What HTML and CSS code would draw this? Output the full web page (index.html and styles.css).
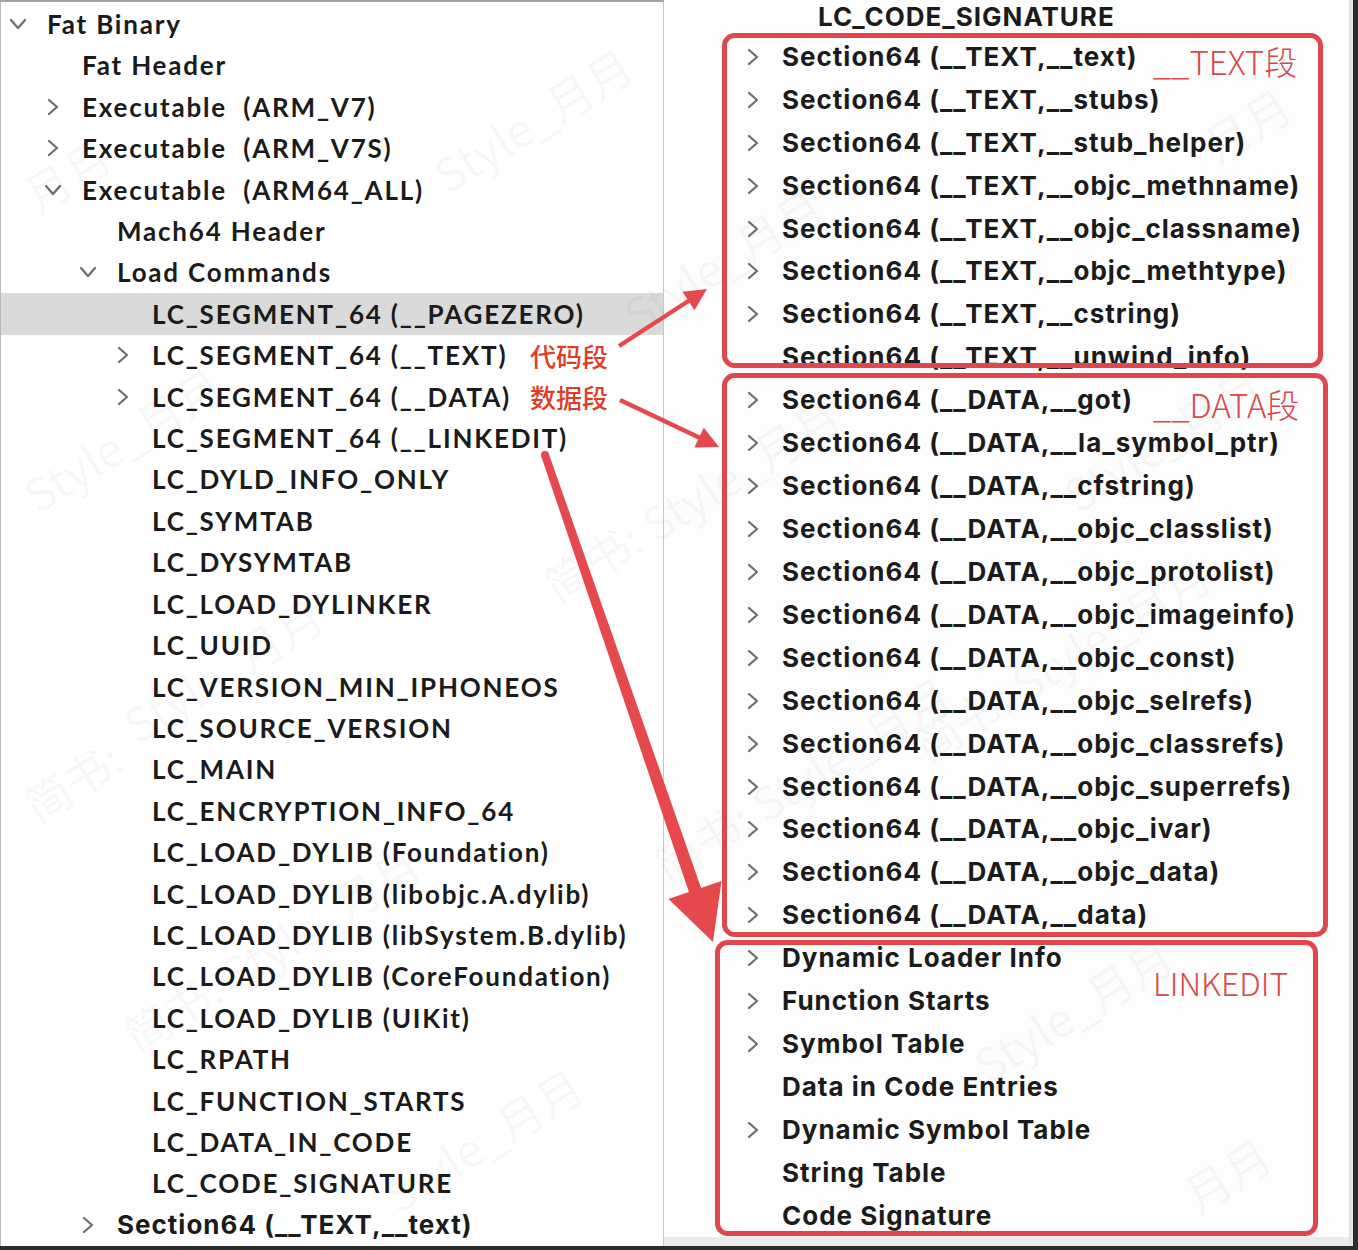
FILE: index.html
```html
<!DOCTYPE html>
<html lang="zh">
<head>
<meta charset="utf-8">
<title>MachOView</title>
<link rel="stylesheet" href="styles.css">
</head>
<body>
<div class="window">
  <div class="pane left">
    <div class="row lv0"><span class="chev"><svg class="down" viewBox="0 0 18 12"><path d="M2 2 L9 10 L16 2"/></svg></span>Fat Binary</div>
    <div class="row lv1"><span class="chev"></span>Fat Header</div>
    <div class="row lv1"><span class="chev"><svg class="rt" viewBox="0 0 12 18"><path d="M2 2 L10 9 L2 16"/></svg></span>Executable&nbsp; (ARM_V7)</div>
    <div class="row lv1"><span class="chev"><svg class="rt" viewBox="0 0 12 18"><path d="M2 2 L10 9 L2 16"/></svg></span>Executable&nbsp; (ARM_V7S)</div>
    <div class="row lv1"><span class="chev"><svg class="down" viewBox="0 0 18 12"><path d="M2 2 L9 10 L16 2"/></svg></span>Executable&nbsp; (ARM64_ALL)</div>
    <div class="row lv2"><span class="chev"></span>Mach64 Header</div>
    <div class="row lv2"><span class="chev"><svg class="down" viewBox="0 0 18 12"><path d="M2 2 L9 10 L16 2"/></svg></span>Load Commands</div>
    <div class="row lv3 selected"><span class="chev"></span>LC_SEGMENT_64 (__PAGEZERO)</div>
    <div class="row lv3"><span class="chev"><svg class="rt" viewBox="0 0 12 18"><path d="M2 2 L10 9 L2 16"/></svg></span>LC_SEGMENT_64 (__TEXT)</div>
    <div class="row lv3"><span class="chev"><svg class="rt" viewBox="0 0 12 18"><path d="M2 2 L10 9 L2 16"/></svg></span>LC_SEGMENT_64 (__DATA)</div>
    <div class="row lv3"><span class="chev"></span>LC_SEGMENT_64 (__LINKEDIT)</div>
    <div class="row lv3"><span class="chev"></span>LC_DYLD_INFO_ONLY</div>
    <div class="row lv3"><span class="chev"></span>LC_SYMTAB</div>
    <div class="row lv3"><span class="chev"></span>LC_DYSYMTAB</div>
    <div class="row lv3"><span class="chev"></span>LC_LOAD_DYLINKER</div>
    <div class="row lv3"><span class="chev"></span>LC_UUID</div>
    <div class="row lv3"><span class="chev"></span>LC_VERSION_MIN_IPHONEOS</div>
    <div class="row lv3"><span class="chev"></span>LC_SOURCE_VERSION</div>
    <div class="row lv3"><span class="chev"></span>LC_MAIN</div>
    <div class="row lv3"><span class="chev"></span>LC_ENCRYPTION_INFO_64</div>
    <div class="row lv3"><span class="chev"></span>LC_LOAD_DYLIB (Foundation)</div>
    <div class="row lv3"><span class="chev"></span>LC_LOAD_DYLIB (libobjc.A.dylib)</div>
    <div class="row lv3"><span class="chev"></span>LC_LOAD_DYLIB (libSystem.B.dylib)</div>
    <div class="row lv3"><span class="chev"></span>LC_LOAD_DYLIB (CoreFoundation)</div>
    <div class="row lv3"><span class="chev"></span>LC_LOAD_DYLIB (UIKit)</div>
    <div class="row lv3"><span class="chev"></span>LC_RPATH</div>
    <div class="row lv3"><span class="chev"></span>LC_FUNCTION_STARTS</div>
    <div class="row lv3"><span class="chev"></span>LC_DATA_IN_CODE</div>
    <div class="row lv3"><span class="chev"></span>LC_CODE_SIGNATURE</div>
    <div class="row lv2 sf"><span class="chev"><svg class="rt" viewBox="0 0 12 18"><path d="M2 2 L10 9 L2 16"/></svg></span>Section64 (__TEXT,__text)</div>
  </div>

  <div class="pane right">
    <div class="tree">
      <div class="row deep first"><span class="chev"></span>LC_CODE_SIGNATURE</div>
      <div class="row"><span class="chev"><svg class="rt" viewBox="0 0 12 18"><path d="M2 2 L10 9 L2 16"/></svg></span>Section64 (__TEXT,__text)</div>
      <div class="row"><span class="chev"><svg class="rt" viewBox="0 0 12 18"><path d="M2 2 L10 9 L2 16"/></svg></span>Section64 (__TEXT,__stubs)</div>
      <div class="row"><span class="chev"><svg class="rt" viewBox="0 0 12 18"><path d="M2 2 L10 9 L2 16"/></svg></span>Section64 (__TEXT,__stub_helper)</div>
      <div class="row"><span class="chev"><svg class="rt" viewBox="0 0 12 18"><path d="M2 2 L10 9 L2 16"/></svg></span>Section64 (__TEXT,__objc_methname)</div>
      <div class="row"><span class="chev"><svg class="rt" viewBox="0 0 12 18"><path d="M2 2 L10 9 L2 16"/></svg></span>Section64 (__TEXT,__objc_classname)</div>
      <div class="row"><span class="chev"><svg class="rt" viewBox="0 0 12 18"><path d="M2 2 L10 9 L2 16"/></svg></span>Section64 (__TEXT,__objc_methtype)</div>
      <div class="row"><span class="chev"><svg class="rt" viewBox="0 0 12 18"><path d="M2 2 L10 9 L2 16"/></svg></span>Section64 (__TEXT,__cstring)</div>
      <div class="row"><span class="chev"></span>Section64 (__TEXT,__unwind_info)</div>
      <div class="row"><span class="chev"><svg class="rt" viewBox="0 0 12 18"><path d="M2 2 L10 9 L2 16"/></svg></span>Section64 (__DATA,__got)</div>
      <div class="row"><span class="chev"><svg class="rt" viewBox="0 0 12 18"><path d="M2 2 L10 9 L2 16"/></svg></span>Section64 (__DATA,__la_symbol_ptr)</div>
      <div class="row"><span class="chev"><svg class="rt" viewBox="0 0 12 18"><path d="M2 2 L10 9 L2 16"/></svg></span>Section64 (__DATA,__cfstring)</div>
      <div class="row"><span class="chev"><svg class="rt" viewBox="0 0 12 18"><path d="M2 2 L10 9 L2 16"/></svg></span>Section64 (__DATA,__objc_classlist)</div>
      <div class="row"><span class="chev"><svg class="rt" viewBox="0 0 12 18"><path d="M2 2 L10 9 L2 16"/></svg></span>Section64 (__DATA,__objc_protolist)</div>
      <div class="row"><span class="chev"><svg class="rt" viewBox="0 0 12 18"><path d="M2 2 L10 9 L2 16"/></svg></span>Section64 (__DATA,__objc_imageinfo)</div>
      <div class="row"><span class="chev"><svg class="rt" viewBox="0 0 12 18"><path d="M2 2 L10 9 L2 16"/></svg></span>Section64 (__DATA,__objc_const)</div>
      <div class="row"><span class="chev"><svg class="rt" viewBox="0 0 12 18"><path d="M2 2 L10 9 L2 16"/></svg></span>Section64 (__DATA,__objc_selrefs)</div>
      <div class="row"><span class="chev"><svg class="rt" viewBox="0 0 12 18"><path d="M2 2 L10 9 L2 16"/></svg></span>Section64 (__DATA,__objc_classrefs)</div>
      <div class="row"><span class="chev"><svg class="rt" viewBox="0 0 12 18"><path d="M2 2 L10 9 L2 16"/></svg></span>Section64 (__DATA,__objc_superrefs)</div>
      <div class="row"><span class="chev"><svg class="rt" viewBox="0 0 12 18"><path d="M2 2 L10 9 L2 16"/></svg></span>Section64 (__DATA,__objc_ivar)</div>
      <div class="row"><span class="chev"><svg class="rt" viewBox="0 0 12 18"><path d="M2 2 L10 9 L2 16"/></svg></span>Section64 (__DATA,__objc_data)</div>
      <div class="row"><span class="chev"><svg class="rt" viewBox="0 0 12 18"><path d="M2 2 L10 9 L2 16"/></svg></span>Section64 (__DATA,__data)</div>
      <div class="row"><span class="chev"><svg class="rt" viewBox="0 0 12 18"><path d="M2 2 L10 9 L2 16"/></svg></span>Dynamic Loader Info</div>
      <div class="row"><span class="chev"><svg class="rt" viewBox="0 0 12 18"><path d="M2 2 L10 9 L2 16"/></svg></span>Function Starts</div>
      <div class="row"><span class="chev"><svg class="rt" viewBox="0 0 12 18"><path d="M2 2 L10 9 L2 16"/></svg></span>Symbol Table</div>
      <div class="row"><span class="chev"></span>Data in Code Entries</div>
      <div class="row"><span class="chev"><svg class="rt" viewBox="0 0 12 18"><path d="M2 2 L10 9 L2 16"/></svg></span>Dynamic Symbol Table</div>
      <div class="row"><span class="chev"></span>String Table</div>
      <div class="row"><span class="chev"></span>Code Signature</div>
    </div>
  </div>
  <div class="edge"></div>
</div>

<div class="watermarks">
  <span class="wm" style="left:420px;top:150px">Style_月月</span>
  <span class="wm" style="left:10px;top:170px">月月</span>
  <span class="wm" style="left:10px;top:470px">Style_月月</span>
  <span class="wm" style="left:10px;top:780px">简书:</span>
  <span class="wm" style="left:110px;top:700px">Style_月月</span>
  <span class="wm" style="left:530px;top:560px">简书: Style_月月</span>
  <span class="wm" style="left:610px;top:290px">Style_月月</span>
  <span class="wm" style="left:1050px;top:470px">Style_月月</span>
  <span class="wm" style="left:640px;top:840px">简书: Style_月月</span>
  <span class="wm" style="left:110px;top:1010px">简书: Style_月月</span>
  <span class="wm" style="left:370px;top:1170px">Style_月月</span>
  <span class="wm" style="left:900px;top:720px">简书: Style_月月</span>
  <span class="wm" style="left:960px;top:1040px">Style_月月</span>
  <span class="wm" style="left:1170px;top:1170px">月月</span>
  <span class="wm" style="left:1190px;top:120px">月月</span>
</div>

<svg class="marks" viewBox="0 0 1358 1250" width="1358" height="1250">
  <rect class="box" x="724.5" y="35.5" width="596" height="330" rx="10"/>
  <rect class="box" x="724.5" y="375.5" width="601" height="559" rx="10"/>
  <rect class="box" x="717.5" y="942.5" width="598" height="291" rx="10"/>
  <polygon class="arrow" points="617.8,344.15 687.3,299.15 682.5,291.8 707,289 694.5,310.2 689.7,302.85 620.2,347.85"/>
  <polygon class="arrow" points="620.94,398.01 700.04,435.61 703.8,427.7 719,447 694.4,447.5 698.16,439.59 619.06,401.99"/>
  <polygon class="arrow" points="548.8,453.7 701.1,887.9 721.5,881 713,942 668.5,899 688.9,892.1 541.2,456.3"/>
  <circle class="arrow" cx="545" cy="455" r="4"/>
</svg>

<div class="note seg" style="left:530px;top:337px">代码段</div>
<div class="note seg" style="left:530px;top:378px">数据段</div>
<div class="note tag" style="left:1153px;top:37px">__TEXT段</div>
<div class="note tag" style="left:1153px;top:380px">__DATA段</div>
<div class="note tag big" style="left:1153px;top:959px">LINKEDIT</div>
</body>
</html>
```
FILE: styles.css
```css
* { box-sizing: border-box; }

html, body {
  margin: 0;
  padding: 0;
}

body {
  width: 1358px;
  height: 1250px;
  overflow: hidden;
  position: relative;
  background: #2c2c2c;
  color: #1b1b1b;
}

.window {
  display: flex;
  height: 1246px;
}

.pane {
  height: 1246px;
  overflow: hidden;
}

.left {
  width: 664px;
  flex: none;
  background: #ffffff;
  border-top: 2px solid #a2a2a2;
  border-left: 1px solid #b8b8b8;
  border-right: 1px solid #c6c6c6;
  padding-top: 1.3px;
}

.right {
  width: 685px;
  flex: none;
  background: #fdfdfd;
  border-bottom: 9px solid #ececec;
}

.edge {
  width: 4px;
  flex: none;
  background: #e4e4e4;
  height: 1246px;
}

.row {
  display: flex;
  align-items: center;
  white-space: nowrap;
}

.left .row {
  height: 41.414px;
  font: 700 26px/28px "Lato", "Noto Sans", sans-serif;
  letter-spacing: 1.8px;
}

.left .row.sf {
  font: 700 26px/28px "Inter", "Noto Sans", sans-serif;
  letter-spacing: 1px;
}

.lv0 { padding-left: 7px; }
.lv1 { padding-left: 42px; }
.lv2 { padding-left: 77px; }
.lv3 { padding-left: 112px; }

.selected {
  background: #dadada;
  margin-left: -1px;
  margin-right: -1px;
  padding-left: 113px;
}

.chev {
  width: 20px;
  height: 20px;
  flex: none;
  margin-right: 19px;
  display: flex;
  align-items: center;
  justify-content: center;
}

.chev svg {
  fill: none;
  stroke: #6f6f6f;
  stroke-width: 2.3;
  stroke-linecap: round;
  stroke-linejoin: round;
}

.chev svg.rt { width: 12px; height: 18px; }
.chev svg.down { width: 18px; height: 12px; }

.right .row {
  height: 42.93px;
  padding-left: 79px;
  font: 700 26px/26px "Inter", "Noto Sans", sans-serif;
  letter-spacing: 1px;
}

.right .row.first {
  height: 35.43px;
  padding-top: 2px;
  padding-bottom: 3px;
}

.right .row.deep {
  padding-left: 115px;
}

/* watermarks */
.watermarks {
  position: absolute;
  left: 0;
  top: 0;
  width: 1358px;
  height: 1250px;
  overflow: hidden;
  pointer-events: none;
}

.wm {
  position: absolute;
  white-space: nowrap;
  font: 400 46px "Noto Sans CJK SC", "Noto Sans", sans-serif;
  color: rgba(0, 0, 0, 0.045);
  transform: rotate(-32deg);
  transform-origin: left top;
}

/* annotation overlay */
.marks {
  position: absolute;
  left: 0;
  top: 0;
  pointer-events: none;
}

.box {
  fill: none;
  stroke: #e0474c;
  stroke-width: 5;
}

.arrow {
  fill: #e5484d;
}

.note {
  position: absolute;
  white-space: nowrap;
  line-height: 1;
}

.seg {
  font: 500 26px "Noto Sans CJK SC", sans-serif;
  color: #e03d26;
}

.tag {
  font: 300 33px "Noto Sans CJK SC", "Noto Sans", sans-serif;
  color: #d9484c;
}

.tag.big {
  font-size: 32px;
}
```
